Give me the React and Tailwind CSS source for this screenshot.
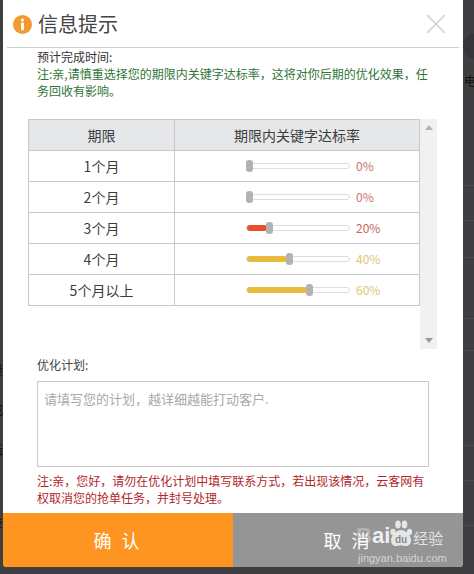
import React from "react";

const rows = [
  { label: "1个月", pct: 0, fill: "", text: "text-[#c8756a]" },
  { label: "2个月", pct: 0, fill: "", text: "text-[#c8756a]" },
  { label: "3个月", pct: 20, fill: "bg-[#e5512d]", text: "text-[#c8685a]" },
  { label: "4个月", pct: 40, fill: "bg-[#e9bb3c]", text: "text-[#e3c474]" },
  { label: "5个月以上", pct: 60, fill: "bg-[#e9bb3c]", text: "text-[#e3c474]" },
];

// faint rows of the page behind the dialog, seen in the right margin
const backdropLines = [185, 220, 257, 318, 350, 445, 480, 525];

const Slider = ({ row }) => (
  <div className="flex items-center justify-start pl-[71px]">
    <div className="relative h-[6px] w-[104px] rounded-full border border-[#dedede] bg-white">
      {row.pct > 0 && (
        <div
          className={`absolute left-0 top-[-1px] h-[6px] rounded-full ${row.fill}`}
          style={{ width: row.pct * 0.98 + "%" }}
        />
      )}
      <div
        className="absolute top-[-4px] ml-[-1px] h-[12px] w-[7px] rounded-[3px] bg-[#b2b2b2]"
        style={{ left: row.pct * 0.98 + "%" }}
      />
    </div>
    <span className={`ml-[6px] text-[12px] leading-none ${row.text}`}>{row.pct}%</span>
  </div>
);

const App = () => {
  return (
    <div className="relative h-[574px] w-[474px] overflow-hidden bg-[#3f3e40] font-['Noto_Sans_CJK_SC',sans-serif]">
      {/* page behind the dialog */}
      <div className="absolute left-[463px] top-[33px] h-[26px] w-[26px] rounded-full bg-[#363537]" />
      <span className="absolute left-[464px] top-[74px] whitespace-nowrap text-[12px] leading-[14px] text-[#111]">电去</span>
      {backdropLines.map((y) => (
        <div key={y} className="absolute left-[463px] h-px w-[11px] bg-[#4c4b4d]" style={{ top: y }} />
      ))}
      <span className="absolute left-[-9px] top-[363px] text-[12px] leading-[14px] text-[#111]">量</span>
      <span className="absolute left-[-9px] top-[403px] text-[12px] leading-[14px] text-[#111]">成</span>
      <span className="absolute left-[-9px] top-[443px] text-[12px] leading-[14px] text-[#111]">后</span>
      <span className="absolute left-[-9px] top-[516px] text-[12px] leading-[14px] text-[#111]">应</span>

      <div className="relative ml-[3px] flex h-[567px] w-[460px] flex-col overflow-hidden rounded-b-[4px] bg-white">
        {/* header */}
        <div className="mx-[4px] flex h-[48px] shrink-0 items-center border-b border-[#cfcfcf] pl-[6px] pr-[13px]">
          <svg width="19" height="19" viewBox="0 0 19 19" className="mt-[2px]">
            <circle cx="9.5" cy="9.5" r="9.5" fill="#f39a2e" />
            <circle cx="9.5" cy="5" r="1.6" fill="#fff" />
            <rect x="8" y="7.6" width="3" height="7.6" rx="0.6" fill="#fff" />
          </svg>
          <span className="ml-[6px] text-[20px] leading-none text-[#444]">信息提示</span>
          <svg width="20" height="20" viewBox="0 0 20 20" className="ml-auto" fill="none" stroke="#d2d2d2" strokeWidth="1.6">
            <path d="M1 1 L19 19 M19 1 L1 19" />
          </svg>
        </div>

        {/* notice */}
        <div className="pl-[34px] pr-[30px] text-[12px] leading-[17px]">
          <p className="text-[#333]">预计完成时间:</p>
          <p className="text-[#2f7436]">注:亲,请慎重选择您的期限内关键字达标率，这将对你后期的优化效果，任务回收有影响。</p>
        </div>

        {/* table + scrollbar */}
        <div className="ml-[25px] mt-[20px] flex h-[230px] w-[409px] shrink-0">
          <table className="h-[187px] w-[392px] table-fixed border-collapse self-start text-[14px] text-[#3d3d3d]">
            <thead>
              <tr className="h-[31px] bg-[#e6e7e9]">
                <th className="w-[146px] border border-[#c8c8c8] font-normal">期限</th>
                <th className="border border-[#c8c8c8] font-normal">期限内关键字达标率</th>
              </tr>
            </thead>
            <tbody>
              {rows.map((row) => (
                <tr key={row.label} className="h-[31px]">
                  <td className="border border-[#c8c8c8] text-center">{row.label}</td>
                  <td className="border border-[#c8c8c8]">
                    <Slider row={row} />
                  </td>
                </tr>
              ))}
            </tbody>
          </table>
          <div className="flex w-[17px] flex-col items-center justify-between bg-[#f1f0f3] py-[6px]">
            <span className="h-0 w-0 border-x-[4px] border-b-[5px] border-x-transparent border-b-[#b4b4b4]" />
            <span className="h-0 w-0 border-x-[4px] border-t-[5px] border-x-transparent border-t-[#9a9a9a]" />
          </div>
        </div>

        {/* plan */}
        <div className="px-[34px] pt-[7px]">
          <p className="text-[12px] leading-[17px] text-[#444]">优化计划:</p>
          <textarea
            className="mt-[8px] block h-[86px] w-[392px] resize-none border border-[#c8c8c8] px-[6px] py-[8px] text-[13px] leading-[18px] outline-none placeholder:text-[#a9a9a9]"
            placeholder="请填写您的计划，越详细越能打动客户."
          />
          <p className="mt-[5px] w-[396px] text-[12px] leading-[17px] text-[#b3262b]">
            注:亲，您好，请勿在优化计划中填写联系方式，若出现该情况，云客网有权取消您的抢单任务，并封号处理。
          </p>
        </div>

        {/* buttons */}
        <div className="mt-auto flex h-[54px] shrink-0 text-[18px] text-white">
          <button className="flex-1 bg-[#fe9520] tracking-[3px]">确 认</button>
          <button className="flex-1 bg-[#959595] tracking-[3px]">取 消</button>
        </div>
      </div>

      {/* watermark over the cancel button */}
      <div className="absolute left-[356px] top-[520px] font-['Liberation_Sans',sans-serif] text-white/85">
        <div className="flex h-[28px] items-end">
          <span className="text-[22px] font-bold leading-[25px]">
            <span className="text-white/30">B</span>ai
          </span>
          <svg width="22" height="27" viewBox="0 0 22 27" className="mb-[1px]">
            <g fill="#e6e6e6">
              <ellipse cx="3" cy="12" rx="2.6" ry="3.2" />
              <ellipse cx="8" cy="4.500" rx="2.8" ry="3.900" />
              <ellipse cx="14.500" cy="4.500" rx="2.8" ry="3.900" />
              <ellipse cx="19.500" cy="12" rx="2.6" ry="3.2" />
              <path d="M11 10c4 0 10 5 10 10.500 0 3-2 5.500-5 5.500-2 0-3-.8-5-.8s-3 .8-5 .8c-3 0-5-2.500-5-5.500C1 15 7 10 11 10z" />
            </g>
            <text x="11" y="23" textAnchor="middle" fontSize="10" fontWeight="700" fill="#8a8a8a">du</text>
          </svg>
          <span className="ml-[1px] font-['Noto_Sans_CJK_SC',sans-serif] text-[15px] leading-[20px] text-white/75">经验</span>
        </div>
        <div className="ml-[2px] mt-[4px] whitespace-nowrap text-[11px] leading-[12px] text-white/60">jingyan.baidu.com</div>
      </div>
    </div>
  );
};

export default App;
